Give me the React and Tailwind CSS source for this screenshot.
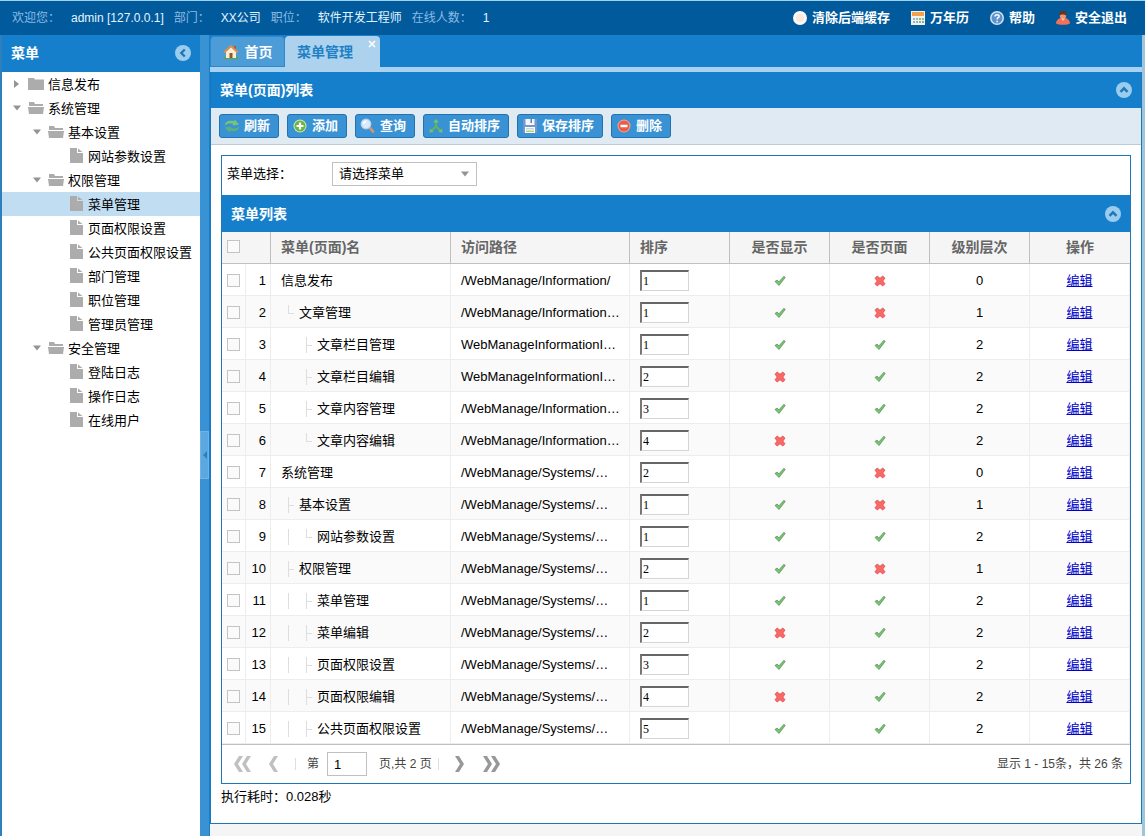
import React from 'react';

const TREE = [
  { text: '信息发布', level: 0, type: 'closed' },
  { text: '系统管理', level: 0, type: 'open' },
  { text: '基本设置', level: 1, type: 'open' },
  { text: '网站参数设置', level: 2, type: 'leaf' },
  { text: '权限管理', level: 1, type: 'open' },
  { text: '菜单管理', level: 2, type: 'leaf', active: true },
  { text: '页面权限设置', level: 2, type: 'leaf' },
  { text: '公共页面权限设置', level: 2, type: 'leaf' },
  { text: '部门管理', level: 2, type: 'leaf' },
  { text: '职位管理', level: 2, type: 'leaf' },
  { text: '管理员管理', level: 2, type: 'leaf' },
  { text: '安全管理', level: 1, type: 'open' },
  { text: '登陆日志', level: 2, type: 'leaf' },
  { text: '操作日志', level: 2, type: 'leaf' },
  { text: '在线用户', level: 2, type: 'leaf' },
];

// lines: one letter per indent step - e: blank, v: vertical, t: branch, l: last branch
const ROWS = [
  { name: '信息发布', lines: '', path: '/WebManage/Information/', sort: 1, show: true, page: false, level: 0 },
  { name: '文章管理', lines: 'l', path: '/WebManage/Information…', sort: 1, show: true, page: false, level: 1 },
  { name: '文章栏目管理', lines: 'et', path: 'WebManageInformationI…', sort: 1, show: true, page: true, level: 2 },
  { name: '文章栏目编辑', lines: 'et', path: 'WebManageInformationI…', sort: 2, show: false, page: true, level: 2 },
  { name: '文章内容管理', lines: 'et', path: '/WebManage/Information…', sort: 3, show: true, page: true, level: 2 },
  { name: '文章内容编辑', lines: 'el', path: '/WebManage/Information…', sort: 4, show: false, page: true, level: 2 },
  { name: '系统管理', lines: '', path: '/WebManage/Systems/…', sort: 2, show: true, page: false, level: 0 },
  { name: '基本设置', lines: 't', path: '/WebManage/Systems/…', sort: 1, show: true, page: false, level: 1 },
  { name: '网站参数设置', lines: 'vl', path: '/WebManage/Systems/…', sort: 1, show: true, page: true, level: 2 },
  { name: '权限管理', lines: 't', path: '/WebManage/Systems/…', sort: 2, show: true, page: false, level: 1 },
  { name: '菜单管理', lines: 'vt', path: '/WebManage/Systems/…', sort: 1, show: true, page: true, level: 2 },
  { name: '菜单编辑', lines: 'vt', path: '/WebManage/Systems/…', sort: 2, show: false, page: true, level: 2 },
  { name: '页面权限设置', lines: 'vt', path: '/WebManage/Systems/…', sort: 3, show: true, page: true, level: 2 },
  { name: '页面权限编辑', lines: 'vt', path: '/WebManage/Systems/…', sort: 4, show: false, page: true, level: 2 },
  { name: '公共页面权限设置', lines: 'vt', path: '/WebManage/Systems/…', sort: 5, show: true, page: true, level: 2 },
];

const INDENT = ['pl-[6px]', 'pl-[26px]', 'pl-[46px]'];

/* ---------- icons ---------- */

const CircleIcon = () => (
  <svg width="16" height="16" viewBox="0 0 16 16">
    <circle cx="8" cy="8" r="7" fill="#fbf9f8" />
    <circle cx="8" cy="8" r="4" fill="#fdeadd" />
  </svg>
);

const CalendarIcon = () => (
  <svg width="16" height="16" viewBox="0 0 16 16">
    <rect x="1" y="1" width="14" height="14" fill="#eef4f0" />
    <rect x="2" y="2" width="12" height="4" fill="#f5a04c" />
    <path d="M3 8h2v2H3zM6 8h2v2H6zM3 11h2v2H3zM6 11h2v2H6z" fill="#9db4bf" />
    <path d="M9 8h2v2H9zM12 8h2v2h-2zM9 11h2v2H9z" fill="#8fba7b" />
    <path d="M12 11h2v2h-2z" fill="#8aa6b4" />
  </svg>
);

const HelpIcon = () => (
  <svg width="16" height="16" viewBox="0 0 16 16">
    <circle cx="8" cy="8" r="7" fill="#d3e2f0" />
    <circle cx="8" cy="8" r="5.5" fill="#5c93cc" />
    <path d="M6 6.600c0-2.600 4.200-2.500 4.100-.2C10 7.800 8.100 7.700 8.100 9.400M8.100 10.800v1.400" fill="none" stroke="#fff" strokeWidth="1.500" />
  </svg>
);

const UserIcon = () => (
  <svg width="16" height="16" viewBox="0 0 16 16">
    <path d="M1 13.500c0-3 2-4.500 4.500-5.500h5c2.500 1 4.500 2.500 4.500 5.500-2 1.800-12 1.800-14 0z" fill="#f4705a" />
    <path d="M6 8h4l-2 3z" fill="#fbd3b4" />
    <circle cx="8" cy="5.500" r="3.200" fill="#e89a72" />
    <path d="M4.500 6C3.800 2 6 1 8 1s4.200 1 3.500 5C10.500 4.800 9 4.500 7.500 4.500 6 4.500 5 5 4.500 6z" fill="#6b3318" />
  </svg>
);

const HomeIcon = () => (
  <svg width="16" height="16" viewBox="0 0 16 16">
    <path d="M1 13h14v2H1z" fill="#5fa53c" />
    <path d="M11 2h2v4h-2z" fill="#b5573a" />
    <path d="M3 7.500 8 3l5 4.500V14H3z" fill="#fbeed2" />
    <path d="M1 8.500 8 2l7 6.500" fill="none" stroke="#d9904d" strokeWidth="2" />
    <path d="M6.500 9h3v5h-3z" fill="#8c5a2e" />
  </svg>
);

const RefreshIcon = () => (
  <svg width="16" height="16" viewBox="0 0 16 16">
    <path d="M1 7.500C1 3.500 5 2 10 3.300L10.800 1.500 15 6.500 8.500 7.800 9.300 6C6 5 3.500 5.500 1 7.500z" fill="#7ac47a" />
    <path d="M15 8.500c0 4-4 5.500-9 4.200l-.8 1.800L1 9.500l6.500-1.300L6.700 10c3.300 1 5.800.5 8.300-1.500z" fill="#5cb07a" />
  </svg>
);

const AddIcon = () => (
  <svg width="16" height="16" viewBox="0 0 16 16">
    <circle cx="8" cy="8" r="6.500" fill="#cfe9bd" />
    <circle cx="8" cy="8" r="5.500" fill="#6db544" />
    <path d="M8 4.500v7M4.500 8h7" stroke="#fff" strokeWidth="2.200" />
  </svg>
);

const SearchIcon = () => (
  <svg width="16" height="16" viewBox="0 0 16 16">
    <path d="m9.500 9.500 3.500 4" stroke="#c9977a" strokeWidth="2.800" strokeLinecap="round" />
    <circle cx="6" cy="6" r="4.800" fill="#d9ebfa" stroke="#b9d2ea" strokeWidth="1.200" />
    <path d="M3.500 6c0-1.500 1-2.500 2.500-2.500" fill="none" stroke="#fff" strokeWidth="1.400" />
  </svg>
);

const SortIcon = () => (
  <svg width="16" height="16" viewBox="0 0 16 16">
    <path d="M8 3v5.500L3.500 13M8 8l4.500 5" fill="none" stroke="#5fb55f" strokeWidth="2" />
    <path d="m8 1 3 3.500H5zM1.500 14.500 2 10.500l3.800 3.500zM14.500 14.500l-.5-4-3.800 3.500z" fill="#74c46a" />
  </svg>
);

const SaveIcon = () => (
  <svg width="16" height="16" viewBox="0 0 16 16">
    <path d="M1 1h14v14H2l-1-1z" fill="#7397cc" />
    <path d="M3.500 1h9v6h-9z" fill="#f3f7fb" />
    <path d="M8.500 1h1.500v4H8.500z" fill="#5c7fb0" />
    <path d="M3 9h10v6H3z" fill="#fff" />
    <path d="M4 10h8v1.500H4z" fill="#c5d5e5" />
    <path d="M4 12.500h8V14H4z" fill="#b7cf6b" />
  </svg>
);

const DeleteIcon = () => (
  <svg width="16" height="16" viewBox="0 0 16 16">
    <circle cx="8" cy="8" r="6.500" fill="#f7a48f" />
    <circle cx="8" cy="8" r="5.500" fill="#ea5c48" />
    <path d="M4.500 8h7" stroke="#fff" strokeWidth="2.500" />
  </svg>
);

const FolderIcon = ({ open }) => (
  <svg width="16" height="16" viewBox="0 0 16 16" className="shrink-0" fill="#acacac">
    {open ? (
      <>
        <path d="M1 2h5l1 2h8v2H1z" />
        <path d="M0 7h16l-1 7H1z" />
      </>
    ) : (
      <path d="M0 2h6l1 1.500h9V14H0z" />
    )}
  </svg>
);

const FileIcon = () => (
  <svg width="16" height="16" viewBox="0 0 16 16" className="shrink-0">
    <path d="M2 0h7v5h6v10H2z" fill="#acacac" />
    <path d="M10 .5 14.500 4H10z" fill="#acacac" />
  </svg>
);

const Arrow = ({ open }) => (
  <svg width="8" height="8" viewBox="0 0 8 8" fill="#949494">
    {open ? <path d="M0 1.500h8L4 6.500z" /> : <path d="M1 0v8l5-4z" />}
  </svg>
);

const CollapseIcon = ({ dir }) => (
  <svg width="16" height="16" viewBox="0 0 16 16">
    <circle cx="8" cy="8" r="8" fill="#9accee" />
    <path
      d={dir === 'left' ? 'M9.800 4.500 6.300 8l3.500 3.500' : 'M4.500 9.800 8 6.300l3.500 3.500'}
      fill="none"
      stroke="#2077b8"
      strokeWidth="2.400"
    />
  </svg>
);

const Tick = () => (
  <svg width="12" height="12" viewBox="0 0 12 12" className="mx-auto block">
    <path d="M1 6.500 3 5l1.800 2L10 1.200l1.200 1.300L5 10.500z" fill="#7cc077" stroke="#559a54" strokeWidth=".8" />
  </svg>
);

const Cross = () => (
  <svg width="12" height="12" viewBox="0 0 12 12" className="mx-auto block">
    <path d="M3.200 1 6 3.300 8.800 1 11 3.200 8.800 6 11 8.800 8.800 11 6 8.700 3.200 11 1 8.800 3.200 6 1 3.200z" fill="#f86a66" stroke="#de4a48" strokeWidth=".8" />
  </svg>
);

const LINE_PATHS = {
  e: '',
  v: 'M7.500 0v16',
  t: 'M7.500 0v16M8 8.500h5',
  l: 'M7.500 0v9M8 8.500h5',
};

const TreeLine = ({ kind }) => (
  <svg width="18" height="16" viewBox="0 0 18 16" className="shrink-0">
    <path d={LINE_PATHS[kind]} fill="none" stroke="#dedede" />
  </svg>
);

const PagerIcon = ({ dir, double, faded }) => (
  <svg
    width={double ? 17 : 10}
    height="16"
    viewBox={double ? '0 0 17 16' : '0 0 10 16'}
    fill={faded ? '#c0c0c0' : '#989898'}
  >
    <path d={dir === 'left' ? 'M5 0h4L4 8l5 8H5L0 8z' : 'M0 0h4l5 8-5 8H0l5-8z'} />
    {double && <path d={dir === 'left' ? 'M13 0h4l-5 8 5 8h-4L8 8z' : 'M8 0h4l5 8-5 8H8l5-8z'} />}
  </svg>
);

/* ---------- layout parts ---------- */

const TOP_LINKS = [
  { text: '清除后端缓存', icon: <CircleIcon /> },
  { text: '万年历', icon: <CalendarIcon /> },
  { text: '帮助', icon: <HelpIcon /> },
  { text: '安全退出', icon: <UserIcon /> },
];

const TOOLS = [
  { text: '刷新', icon: <RefreshIcon /> },
  { text: '添加', icon: <AddIcon /> },
  { text: '查询', icon: <SearchIcon /> },
  { text: '自动排序', icon: <SortIcon /> },
  { text: '保存排序', icon: <SaveIcon /> },
  { text: '删除', icon: <DeleteIcon /> },
];

const USER_INFO = [
  ['欢迎您：', 'admin [127.0.0.1]'],
  ['部门：', 'XX公司'],
  ['职位：', '软件开发工程师'],
  ['在线人数：', '1'],
];

function TopBar() {
  return (
    <header className="h-[35px] shrink-0 border-t border-[#9fd3f3] bg-[#005a9c] pl-3 pr-[18px] flex items-center justify-between">
      <dl className="flex gap-[10px] text-[12px]">
        {USER_INFO.map(([label, value]) => (
          <React.Fragment key={label}>
            <dt className="text-[#8dbbe2]">{label}</dt>
            <dd className="pl-px text-[#e4f5ff]">{value}</dd>
          </React.Fragment>
        ))}
      </dl>
      <nav className="flex gap-5">
        {TOP_LINKS.map((item) => (
          <button key={item.text} className="flex items-center gap-1 font-bold text-white">
            {item.icon}
            {item.text}
          </button>
        ))}
      </nav>
    </header>
  );
}

function Sidebar() {
  return (
    <aside className="w-[200px] shrink-0 border-l-2 border-[#2e80bd] bg-white">
      <div className="h-9 bg-[#157fcc] px-[9px] flex items-center justify-between">
        <h2 className="text-[14px] font-bold text-white">菜单</h2>
        <button aria-label="收起菜单"><CollapseIcon dir="left" /></button>
      </div>
      <ul className="border-t border-[#157fcc]">
        {TREE.map((node) => (
          <li
            key={node.text + node.level}
            className={`h-6 flex items-center ${INDENT[node.level]} ${node.active ? 'bg-[#c1ddf1]' : ''}`}
          >
            <span className="w-5 shrink-0 pl-[5px]">
              {node.type !== 'leaf' && <Arrow open={node.type === 'open'} />}
            </span>
            {node.type === 'leaf' ? <FileIcon /> : <FolderIcon open={node.type === 'open'} />}
            <a href="#" className="ml-1 pt-0.5 whitespace-nowrap text-black">{node.text}</a>
          </li>
        ))}
      </ul>
    </aside>
  );
}

function Tabs() {
  return (
    <div className="flex h-[37px] items-start border-b-[5px] border-[#a8d2f1] bg-[#157fcc]">
      <button className="mt-px h-[31px] w-[75px] rounded-t-sm border border-[#3187c8] bg-[#4b9cd7] flex items-center justify-center gap-[6px] text-[14px] font-bold text-white">
        <HomeIcon />
        首页
      </button>
      <div className="relative mt-px h-9 w-[95px] rounded-t-sm bg-[#add2ed]">
        <button className="h-[31px] pl-3 text-[14px] font-bold text-[#1f80c5]">菜单管理</button>
        <button aria-label="关闭" className="absolute right-1 top-1">
          <svg width="8" height="8" viewBox="0 0 8 8"><path d="m1 1 6 6M7 1 1 7" stroke="#fff" strokeWidth="1.600" /></svg>
        </button>
      </div>
    </div>
  );
}

function MenuTable() {
  const head = 'h-8 pb-0.5 border-b border-r border-[#c0c0c0] bg-[#f5f5f5] text-[14px] font-bold text-[#666]';
  const cell = 'h-8 pt-0.5 border-b border-r border-[#ededed]';
  const box = 'block h-[13px] w-[13px] appearance-none border border-[#c4c4c4] bg-[#fafafa]';
  return (
    <table className="w-full table-fixed border-separate border-spacing-0">
      <colgroup>
        <col className="w-6" />
        <col className="w-[25px]" />
        <col className="w-[180px]" />
        <col className="w-[179px]" />
        <col className="w-[100px]" />
        <col className="w-[100px]" />
        <col className="w-[100px]" />
        <col className="w-[100px]" />
        <col />
      </colgroup>
      <thead>
        <tr>
          <th colSpan={2} className={`${head} pl-[5px]`}>
            <input type="checkbox" aria-label="全选" className={box} />
          </th>
          <th className={`${head} pl-[10px] text-left`}>菜单(页面)名</th>
          <th className={`${head} pl-[10px] text-left`}>访问路径</th>
          <th className={`${head} pl-[10px] text-left`}>排序</th>
          <th className={head}>是否显示</th>
          <th className={head}>是否页面</th>
          <th className={head}>级别层次</th>
          <th className={`${head} border-r-0`}>操作</th>
        </tr>
      </thead>
      <tbody className="text-black">
        {ROWS.map((row, i) => (
          <tr key={i} className="even:bg-[#fafafa]">
            <td className={`${cell} pl-[5px]`}>
              <input type="checkbox" aria-label={row.name} className={box} />
            </td>
            <td className={`${cell} pr-1 text-right`}>{i + 1}</td>
            <td className={`${cell} pl-[10px]`}>
              <div className="flex items-center whitespace-nowrap">
                {row.lines.split('').map((kind, n) => <TreeLine key={n} kind={kind} />)}
                {row.name}
              </div>
            </td>
            <td className={`${cell} truncate pl-[10px]`}>{row.path}</td>
            <td className={`${cell} pl-[10px]`}>
              <input
                type="text"
                aria-label="排序"
                defaultValue={row.sort}
                className="block h-[21px] w-[49px] border border-l-2 border-t-2 border-[#d5d5d5] border-l-[#777] border-t-[#666] bg-white pl-px font-['Liberation_Serif',serif] text-[12px]"
              />
            </td>
            <td className={cell}>{row.show ? <Tick /> : <Cross />}</td>
            <td className={cell}>{row.page ? <Tick /> : <Cross />}</td>
            <td className={`${cell} text-center`}>{row.level}</td>
            <td className={`${cell} text-center`}>
              <a href="#" className="text-[#0000cc] underline">编辑</a>
            </td>
          </tr>
        ))}
      </tbody>
    </table>
  );
}

function Pager() {
  return (
    <div className="flex h-[39px] items-center border-t border-[#c0c0c0] pl-3 pr-[7px] text-[12px] text-[#444]">
      <button aria-label="首页"><PagerIcon dir="left" double faded /></button>
      <button aria-label="上一页" className="ml-[18px]"><PagerIcon dir="left" faded /></button>
      <span className="ml-4 h-3 w-px bg-[#dedede]" />
      <label className="ml-[11px] flex items-center">
        第
        <input type="text" defaultValue="1" className="ml-2 h-6 w-10 border border-[#c0c0c0] pl-[6px] text-[13px] text-black" />
      </label>
      <span className="ml-3">页,共 2 页</span>
      <span className="ml-[6px] h-3 w-px bg-[#dedede]" />
      <button aria-label="下一页" className="ml-4"><PagerIcon dir="right" /></button>
      <button aria-label="末页" className="ml-[18px]"><PagerIcon dir="right" double /></button>
      <span className="ml-auto">显示 1 - 15条，共 26 条</span>
    </div>
  );
}

function App() {
  return (
    <div className="flex min-h-screen flex-col bg-[#f5f5f5] font-['Liberation_Sans','Noto_Sans_CJK_SC',sans-serif] text-[13px] leading-4">
      <TopBar />
      <div className="flex flex-1">
        <Sidebar />

        {/* splitter */}
        <div className="flex w-[10px] shrink-0 flex-col justify-center border-r border-[#157fcc] bg-[#3892d3] pt-[38px]">
          <button aria-label="收起" className="flex h-12 items-center justify-center border border-[#6fb4e4] bg-[#5aa8df]">
            <svg width="4" height="8" viewBox="0 0 4 8"><path d="M4 0v8L0 4z" fill="#2a7fc0" /></svg>
          </button>
        </div>

        <main className="min-w-0 flex-1 border-r-[3px] border-[#9fc4dd]">
          <Tabs />
          <section className="border border-t-0 border-[#2077b8] bg-white">
            <div className="flex h-9 items-center justify-between bg-[#157fcc] px-[9px]">
              <h2 className="text-[14px] font-bold text-white">菜单(页面)列表</h2>
              <button aria-label="收起面板"><CollapseIcon dir="up" /></button>
            </div>
            <div className="flex h-[37px] items-center gap-2 border-b border-[#bccbd8] bg-[#dfeaf2] pl-2">
              {TOOLS.map((tool) => (
                <button
                  key={tool.text}
                  className="flex h-6 items-center gap-1 rounded-[3px] border border-[#2271b0] bg-[#3892d3] pl-[4px] pr-2 font-bold text-white"
                >
                  {tool.icon}
                  {tool.text}
                </button>
              ))}
            </div>

            <div className="px-[10px] pt-[10px] pb-[18px]">
              <div className="border border-[#2077b8]">
                <div className="flex h-[39px] items-center pl-[5px] pb-1 text-black">
                  <label htmlFor="menu" className="w-[105px]">菜单选择：</label>
                  <div className="relative">
                    <select id="menu" className="h-6 w-[145px] appearance-none border border-[#c0c0c0] bg-white pl-[6px]">
                      <option>请选择菜单</option>
                    </select>
                    <span className="pointer-events-none absolute right-2 top-2">
                      <Arrow open />
                    </span>
                  </div>
                </div>
                <div className="flex h-[37px] items-center justify-between bg-[#157fcc] px-[9px]">
                  <h3 className="text-[14px] font-bold text-white">菜单列表</h3>
                  <button aria-label="收起列表"><CollapseIcon dir="up" /></button>
                </div>
                <MenuTable />
                <Pager />
              </div>
              <p className="mt-[5px] text-black">执行耗时：0.028秒</p>
            </div>
          </section>
        </main>
      </div>
    </div>
  );
}

export default App;
